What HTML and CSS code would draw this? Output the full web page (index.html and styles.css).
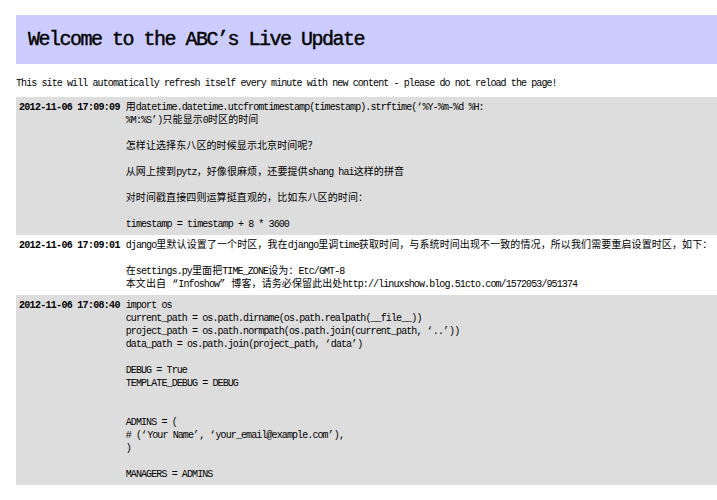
FILE: index.html
```html
<!DOCTYPE html>
<html>
<head>
<meta charset="utf-8">
<title>ABC Live Update</title>
<link rel="stylesheet" href="styles.css">
</head>
<body>
<div class="banner"><h1 class="title">Welcome to the ABC’s Live Update</h1></div>
<p class="intro">This site will automatically refresh itself every minute with new content - please do not reload the page!</p>
<table class="feed">
<tr class="alt">
<th class="stamp">2012-11-06 17:09:09</th>
<td class="msg"><span class="zh">用</span>datetime.datetime.utcfromtimestamp(timestamp).strftime(<span class="zh">‘</span>%Y-%m-%d %H:<br>%M:%S<span class="zh">’</span>)<span class="zh">只能显示</span>0<span class="zh">时区的时间</span><br><br><span class="zh">怎样让选择东八区的时候显示北京时间呢？</span><br><br><span class="zh">从网上搜到</span>pytz<span class="zh">，好像很麻烦，还要提供</span>shang hai<span class="zh">这样的拼音</span><br><br><span class="zh">对时间戳直接四则运算挺直观的，比如东八区的时间：</span><br><br>timestamp = timestamp + 8 * 3600</td>
</tr>
<tr>
<th class="stamp">2012-11-06 17:09:01</th>
<td class="msg">django<span class="zh">里默认设置了一个时区，我在</span>django<span class="zh">里调</span>time<span class="zh">获取时间，与系统时间出现不一致的情况，所以我们需要重启设置时区，如下：</span><br><br><span class="zh">在</span>settings.py<span class="zh">里面把</span>TIME_ZONE<span class="zh">设为：</span>Etc/GMT-8<br><span class="zh">本文出自 “</span>Infoshow<span class="zh">” 博客，请务必保留此出处</span>http://linuxshow.blog.51cto.com/1572053/951374</td>
</tr>
<tr class="alt">
<th class="stamp">2012-11-06 17:08:40</th>
<td class="msg">import os<br>current_path = os.path.dirname(os.path.realpath(__file__))<br>project_path = os.path.normpath(os.path.join(current_path, <span class="zh">‘</span>..<span class="zh">’</span>))<br>data_path = os.path.join(project_path, <span class="zh">‘</span>data<span class="zh">’</span>)<br><br>DEBUG = True<br>TEMPLATE_DEBUG = DEBUG<br><br><br>ADMINS = (<br># (<span class="zh">‘</span>Your Name<span class="zh">’</span>, <span class="zh">‘</span>your_email@example.com<span class="zh">’</span>),<br>)<br><br>MANAGERS = ADMINS</td>
</tr>
</table>
</body>
</html>
```

FILE: styles.css
```css
html, body {
  background: #ffffff;
}

body {
  margin: 0;
  padding: 15px 0 0 16px;
  font-family: "Liberation Mono", "Noto Sans CJK SC", monospace;
  font-size: 10px;
  letter-spacing: -0.9px;
  color: #000000;
}

.banner {
  background: #ccccff;
  height: 49px;
  padding-left: 12px;
  display: flex;
  align-items: center;
}

.title {
  margin: 0;
  font-size: 20px;
  font-weight: normal;
  letter-spacing: -1.5px;
  line-height: 1;
  -webkit-text-stroke: 0.4px #000000;
}

.intro {
  margin: 13px 0 7px;
  line-height: 13px;
}

.feed {
  border-collapse: collapse;
  width: 100%;
}

.feed th,
.feed td {
  padding: 4px 3px;
  vertical-align: top;
  text-align: left;
  line-height: 13px;
}

.alt {
  background: #dddddd;
}

.stamp {
  font-weight: bold;
  letter-spacing: -0.7px;
  white-space: nowrap;
}

.msg {
  width: 100%;
  white-space: nowrap;
}

.zh {
  letter-spacing: 0.1px;
}
```
